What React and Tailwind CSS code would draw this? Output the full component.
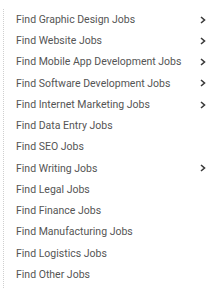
import React from 'react';

const jobs = [
  { label: 'Find Graphic Design Jobs', sub: true },
  { label: 'Find Website Jobs', sub: true },
  { label: 'Find Mobile App Development Jobs', sub: true },
  { label: 'Find Software Development Jobs', sub: true },
  { label: 'Find Internet Marketing Jobs', sub: true },
  { label: 'Find Data Entry Jobs', sub: false },
  { label: 'Find SEO Jobs', sub: false },
  { label: 'Find Writing Jobs', sub: true },
  { label: 'Find Legal Jobs', sub: false },
  { label: 'Find Finance Jobs', sub: false },
  { label: 'Find Manufacturing Jobs', sub: false },
  { label: 'Find Logistics Jobs', sub: false },
  { label: 'Find Other Jobs', sub: false },
];

const Chevron = () => (
  <svg width="6" height="8" viewBox="0 0 6 8" className="text-[#3a3a3a]">
    <polyline points="1,1 4.5,4 1,7" fill="none" stroke="currentColor" strokeWidth="1.6" />
  </svg>
);

export default function App() {
  return (
    <div className="w-[221px] h-[302px] bg-white pt-[9px] pl-[3px]" style={{ fontFamily: 'Roboto, "Liberation Sans", sans-serif' }}>
      <ul className="border-l border-dotted border-[#cfcfcf] w-[203px] pb-[3px]">
        {jobs.map((job) => (
          <li key={job.label} className="h-[21.25px] flex items-center justify-between pl-[12px] text-[10.5px] text-[#555]">
            <span>{job.label}</span>
            {job.sub && <Chevron />}
          </li>
        ))}
      </ul>
    </div>
  );
}
